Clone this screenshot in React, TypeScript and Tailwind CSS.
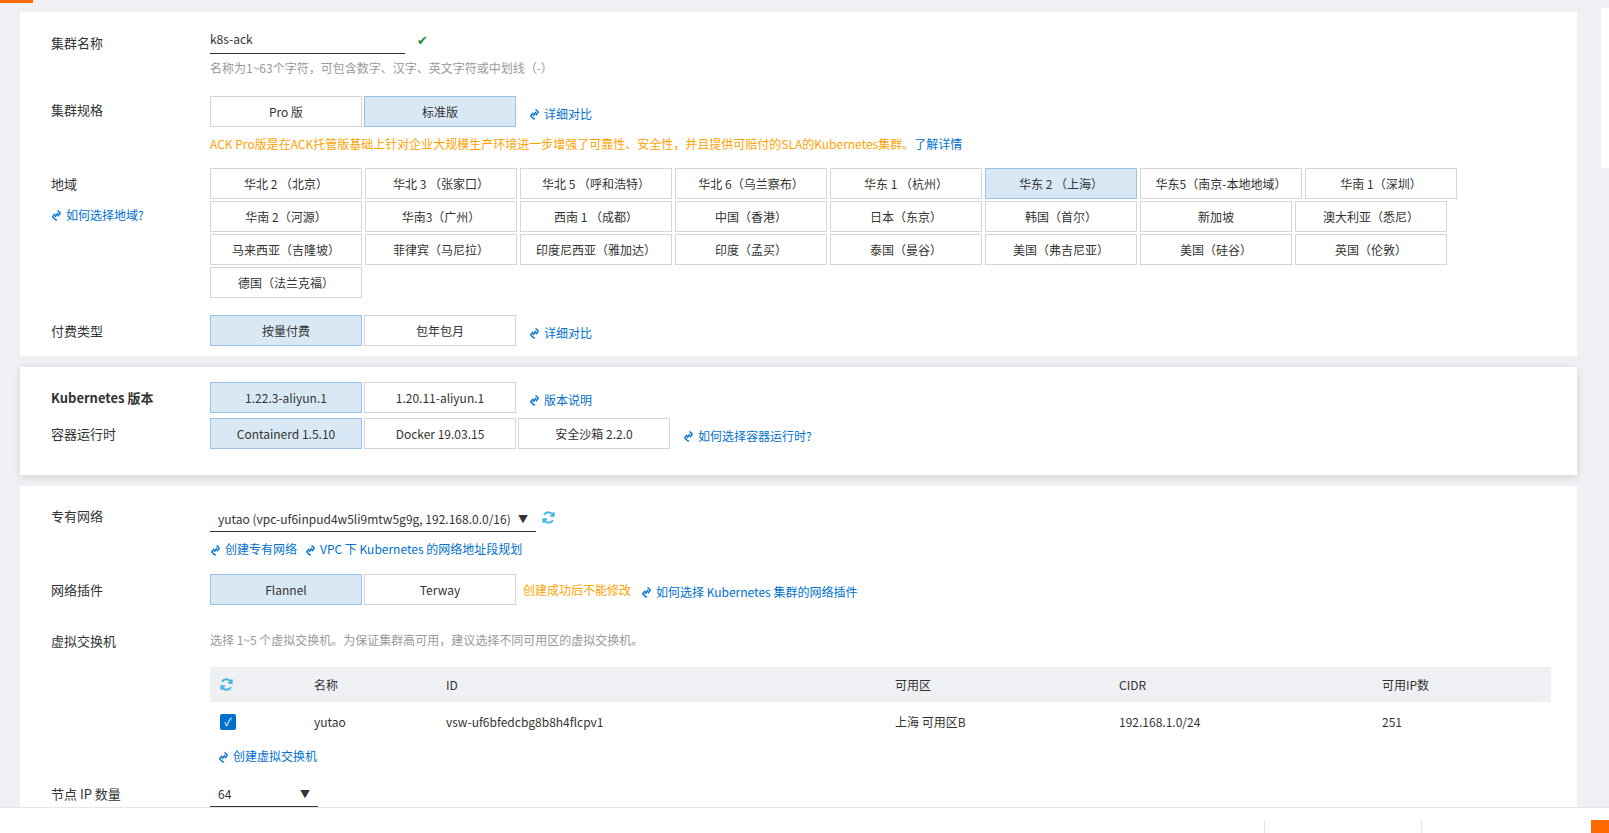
import React from "react";

const LinkIcon = () => (
  <svg width="11" height="12" viewBox="0 0 11 12" className="inline-block mr-1 -mt-[2px]" fill="none" stroke="#0070cc" strokeWidth="1.4">
    <path d="M6.5 1.5 L8.8 3.5 Q9.6 4.3 8.8 5.1 L6.8 7.2" />
    <path d="M4.3 4.8 L2.2 6.9 Q1.4 7.7 2.2 8.5 L4.3 10.5 Q5.1 11.2 5.9 10.4" />
    <path d="M4 8 L7 4" />
  </svg>
);

const Refresh = () => (
  <svg width="15" height="15" viewBox="0 0 16 16" fill="none" stroke="#3fb4e8" strokeWidth="2">
    <path d="M13 6 A5.5 5.5 0 0 0 3.2 5" />
    <path d="M13.5 2.5 V6.2 H9.8" />
    <path d="M3 10 A5.5 5.5 0 0 0 12.8 11" />
    <path d="M2.5 13.5 V9.8 H6.2" />
  </svg>
);

const A = ({ children }: { children: React.ReactNode }) => (
  <a className="text-[#0070cc] text-[12px] whitespace-nowrap"><LinkIcon />{children}</a>
);

function Btn({ label, sel, w = "w-[152px]" }: { label: string; sel?: boolean; w?: string }) {
  return (
    <div className={`${w} h-[31px] shrink-0 flex items-center justify-center text-[12px] text-[#333] border ${sel ? "bg-[#d9e8f5] border-[#9ac2e6]" : "bg-white border-[#d6d6d6]"}`}>
      {label}
    </div>
  );
}

const Label = ({ children, bold }: { children: React.ReactNode; bold?: boolean }) => (
  <div className={`w-[159px] shrink-0 text-[13px] text-[#333] ${bold ? "font-semibold" : ""}`}>{children}</div>
);

const regions = [
  [["华北 2 （北京）"], ["华北 3 （张家口）"], ["华北 5 （呼和浩特）"], ["华北 6（乌兰察布）"], ["华东 1 （杭州）"], ["华东 2 （上海）", true], ["华东5（南京-本地地域）", false, "w-[162px]"], ["华南 1（深圳）"]],
  [["华南 2（河源）"], ["华南3（广州）"], ["西南 1 （成都）"], ["中国（香港）"], ["日本（东京）"], ["韩国（首尔）"], ["新加坡"], ["澳大利亚（悉尼）"]],
  [["马来西亚（吉隆坡）"], ["菲律宾（马尼拉）"], ["印度尼西亚（雅加达）"], ["印度（孟买）"], ["泰国（曼谷）"], ["美国（弗吉尼亚）"], ["美国（硅谷）"], ["英国（伦敦）"]],
  [["德国（法兰克福）"]],
] as [string, boolean?, string?][][];

export default function App() {
  return (
    <div className="relative w-[1609px] h-[833px] overflow-hidden bg-[#eff0f3]" style={{ fontFamily: '"Noto Sans CJK SC", "Noto Sans", sans-serif' }}>
      <div className="h-[3px] w-[33px] bg-[#ff6a00]" />
      <div className="absolute right-0 top-[8px] w-[8px] h-[160px] bg-white" />
      <div className="pl-[20px] pt-[9px] w-[1577px] flex flex-col gap-[11px]">
        {/* card 1 */}
        <div className="bg-white h-[344px] pl-[31px] pt-[21px]">
          <div className="flex">
            <Label>集群名称</Label>
            <div>
              <div className="flex items-center">
                <div className="w-[195px] border-b border-[#333] text-[12px] text-[#333] pb-[3px] h-[21px] leading-none">k8s-ack</div>
                <span className="ml-[12px] text-[#2b8a3e] text-[13px] -mt-[8px]">✔</span>
              </div>
              <div className="text-[12px] text-[#999] mt-[5px]">名称为1~63个字符，可包含数字、汉字、英文字符或中划线（-）</div>
            </div>
          </div>
          <div className="flex mt-[19px]">
            <Label><div className="pt-[4px]">集群规格</div></Label>
            <div>
              <div className="flex items-center gap-[2px]">
                <Btn label="Pro 版" />
                <Btn label="标准版" sel />
                <div className="ml-[11px]"><A>详细对比</A></div>
              </div>
              <div className="text-[12px] text-[#ffa200] mt-[8px]">ACK Pro版是在ACK托管版基础上针对企业大规模生产环境进一步增强了可靠性、安全性，并且提供可赔付的SLA的Kubernetes集群。<span className="text-[#0070cc]">了解详情</span></div>
            </div>
          </div>
          <div className="flex mt-[15px]">
            <div className="w-[159px] shrink-0 pt-[6px]">
              <div className="text-[13px] text-[#333]">地域</div>
              <div className="mt-[7px]"><A>如何选择地域?</A></div>
            </div>
            <div className="flex flex-col gap-[2px]">
              {regions.map((row, i) => (
                <div key={i} className="flex gap-[3px]">
                  {row.map(([l, s, w]) => <Btn key={l} label={l} sel={s} w={w ?? "w-[152px]"} />)}
                </div>
              ))}
            </div>
          </div>
          <div className="flex items-center mt-[17px]">
            <Label>付费类型</Label>
            <div className="flex items-center gap-[2px]">
              <Btn label="按量付费" sel />
              <Btn label="包年包月" />
              <div className="ml-[11px]"><A>详细对比</A></div>
            </div>
          </div>
        </div>
        {/* card 2 */}
        <div className="bg-white h-[108px] pl-[31px] pt-[15px] shadow-[0_2px_8px_rgba(0,0,0,0.12)] flex flex-col">
          <div className="flex items-center">
            <Label bold>Kubernetes 版本</Label>
            <div className="flex items-center gap-[2px]">
              <Btn label="1.22.3-aliyun.1" sel />
              <Btn label="1.20.11-aliyun.1" />
              <div className="ml-[11px]"><A>版本说明</A></div>
            </div>
          </div>
          <div className="flex items-center mt-[5px]">
            <Label>容器运行时</Label>
            <div className="flex items-center gap-[2px]">
              <Btn label="Containerd 1.5.10" sel />
              <Btn label="Docker 19.03.15" />
              <Btn label="安全沙箱 2.2.0" />
              <div className="ml-[11px]"><A>如何选择容器运行时?</A></div>
            </div>
          </div>
        </div>
        {/* card 3 */}
        <div className="bg-white h-[330px] pl-[31px] pt-[20px]">
          <div className="flex">
            <Label>专有网络</Label>
            <div>
              <div className="flex items-center">
                <div className="w-[326px] border-b border-[#333] h-[26px] flex items-center justify-between px-[8px] text-[12px] text-[#333] whitespace-nowrap">
                  <span>yutao (vpc-uf6inpud4w5li9mtw5g9g, 192.168.0.0/16)</span>
                  <span className="text-[10px]">▼</span>
                </div>
                <div className="ml-[5px] -mt-[3px]"><Refresh /></div>
              </div>
              <div className="flex gap-[8px] mt-[8px]"><A>创建专有网络</A><A>VPC 下 Kubernetes 的网络地址段规划</A></div>
            </div>
          </div>
          <div className="flex items-center mt-[16px]">
            <Label>网络插件</Label>
            <div className="flex items-center gap-[2px]">
              <Btn label="Flannel" sel />
              <Btn label="Terway" />
              <span className="ml-[5px] text-[12px] text-[#ffa200]">创建成功后不能修改</span>
              <div className="ml-[8px]"><A>如何选择 Kubernetes 集群的网络插件</A></div>
            </div>
          </div>
          <div className="flex mt-[26px]">
            <Label>虚拟交换机</Label>
            <div className="flex-1 pr-[26px]">
              <div className="text-[12px] text-[#999]">选择 1~5 个虚拟交换机。为保证集群高可用，建议选择不同可用区的虚拟交换机。</div>
              <div className="mt-[18px] text-[12px] text-[#333]">
                <div className="flex items-center h-[35px] bg-[#eff0f3]">
                  <div className="w-[104px] pl-[9px]"><Refresh /></div>
                  <div className="w-[132px]">名称</div>
                  <div className="w-[449px]">ID</div>
                  <div className="w-[224px]">可用区</div>
                  <div className="w-[263px]">CIDR</div>
                  <div>可用IP数</div>
                </div>
                <div className="flex items-center h-[39px]">
                  <div className="w-[104px] pl-[10px]">
                    <div className="w-[16px] h-[16px] bg-[#0070cc] rounded-[2px] flex items-center justify-center text-white text-[11px]">✓</div>
                  </div>
                  <div className="w-[132px]">yutao</div>
                  <div className="w-[449px]">vsw-uf6bfedcbg8b8h4flcpv1</div>
                  <div className="w-[224px]">上海 可用区B</div>
                  <div className="w-[263px]">192.168.1.0/24</div>
                  <div>251</div>
                </div>
                <div className="pl-[8px] mt-[6px]"><A>创建虚拟交换机</A></div>
              </div>
            </div>
          </div>
          <div className="flex items-center mt-[16px]">
            <Label>节点 IP 数量</Label>
            <div className="w-[108px] border-b border-[#333] h-[26px] flex items-center justify-between px-[8px] text-[12px] text-[#333]">
              <span>64</span><span className="text-[10px]">▼</span>
            </div>
          </div>
        </div>
      </div>
      <div className="absolute left-0 bottom-0 w-full h-[26px] bg-white border-t border-[#e5e5e5]">
        <div className="absolute left-[1264px] top-[12px] w-px h-[14px] bg-[#e5e5e5]" />
        <div className="absolute left-[1421px] top-[12px] w-px h-[14px] bg-[#e5e5e5]" />
        <div className="absolute left-[1591px] top-[12px] w-[18px] h-[14px] bg-[#ff6a00]" />
      </div>
    </div>
  );
}
